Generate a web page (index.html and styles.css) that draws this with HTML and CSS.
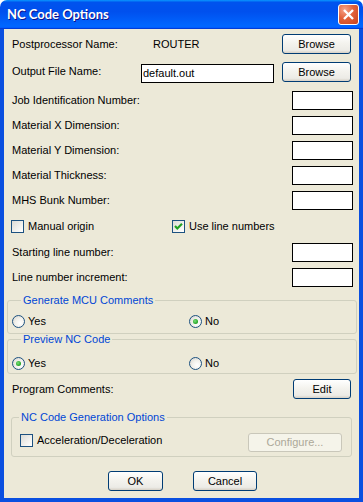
FILE: index.html
```html
<!DOCTYPE html>
<html lang="en">
<head>
    <meta charset="UTF-8">
    <title>NC Code Options</title>
    <link rel="stylesheet" href="styles.css">
</head>
<body>
    <div class="window">
        <div class="titlebar">
            <span class="title">NC Code Options</span>
            <span class="close">
                <svg width="19" height="19" viewBox="0 0 19 19">
                    <path d="M5 5 L14 14 M14 5 L5 14" stroke="#fff" stroke-width="2.4" fill="none"/>
                </svg>
            </span>
        </div>

        <div class="frame">
            <div class="row row-top">
                <span class="label-fixed">Postprocessor Name:</span>
                <span class="value">ROUTER</span>
                <button class="btn btn-browse">Browse</button>
            </div>

            <div class="row row-file">
                <span class="label-fixed">Output File Name:</span>
                <span class="textbox textbox-wide">default.out</span>
                <button class="btn btn-browse">Browse</button>
            </div>

            <div class="row row-field first">
                <span class="label">Job Identification Number:</span>
                <span class="textbox"></span>
            </div>
            <div class="row row-field">
                <span class="label">Material X Dimension:</span>
                <span class="textbox"></span>
            </div>
            <div class="row row-field">
                <span class="label">Material Y Dimension:</span>
                <span class="textbox"></span>
            </div>
            <div class="row row-field">
                <span class="label">Material Thickness:</span>
                <span class="textbox"></span>
            </div>
            <div class="row row-field">
                <span class="label">MHS Bunk Number:</span>
                <span class="textbox"></span>
            </div>

            <div class="row row-checks">
                <span class="check-item first-check">
                    <span class="check"></span>
                    <span>Manual origin</span>
                </span>
                <span class="check-item">
                    <span class="check">
                        <svg width="11" height="11" viewBox="0 0 11 11">
                            <path d="M2 5 L4.3 7.5 L9 2.8" stroke="#21a121" stroke-width="2.2" fill="none"/>
                        </svg>
                    </span>
                    <span>Use line numbers</span>
                </span>
            </div>

            <div class="row row-field first">
                <span class="label">Starting line number:</span>
                <span class="textbox"></span>
            </div>
            <div class="row row-field">
                <span class="label">Line number increment:</span>
                <span class="textbox"></span>
            </div>

            <fieldset class="group group-mcu">
                <legend>Generate MCU Comments</legend>
                <div class="radio-row">
                    <span class="radio-item first-radio">
                        <span class="radio"></span>
                        <span>Yes</span>
                    </span>
                    <span class="radio-item">
                        <span class="radio"><span class="dot"></span></span>
                        <span>No</span>
                    </span>
                </div>
            </fieldset>

            <fieldset class="group group-preview">
                <legend>Preview NC Code</legend>
                <div class="radio-row">
                    <span class="radio-item first-radio">
                        <span class="radio"><span class="dot"></span></span>
                        <span>Yes</span>
                    </span>
                    <span class="radio-item">
                        <span class="radio"></span>
                        <span>No</span>
                    </span>
                </div>
            </fieldset>

            <div class="row row-edit">
                <span class="label">Program Comments:</span>
                <button class="btn btn-edit">Edit</button>
            </div>

            <fieldset class="group group-gen">
                <legend>NC Code Generation Options</legend>
                <div class="gen-row">
                    <span class="check-item">
                        <span class="check"></span>
                        <span>Acceleration/Deceleration</span>
                    </span>
                    <button class="btn btn-configure" disabled>Configure...</button>
                </div>
            </fieldset>

            <div class="actions">
                <button class="btn btn-ok">OK</button>
                <button class="btn btn-cancel">Cancel</button>
            </div>
        </div>
    </div>
</body>
</html>
```

FILE: styles.css
```css
* {
    box-sizing: border-box;
}

html, body {
    margin: 0;
    padding: 0;
    background: #ffffff;
}

body {
    font-family: "Liberation Sans", Arial, sans-serif;
    font-size: 11px;
    line-height: 13px;
    color: #000;
}

.window {
    width: 363px;
    height: 502px;
    display: flex;
    flex-direction: column;
}

.titlebar {
    height: 29px;
    flex: none;
    display: flex;
    align-items: center;
    justify-content: space-between;
    padding: 0 4px 0 7px;
    border-radius: 7px 7px 0 0;
    background: linear-gradient(180deg, #0997ff, #0053ee 8%, #0050ee 40%, #0066ff 88%, #0066ff 93%, #005bff 95%, #003dd7 96%, #003dd7);
}

.title {
    font-family: Lato, "Liberation Sans", sans-serif;
    font-weight: bold;
    font-size: 13px;
    color: #fff;
    text-shadow: 1px 1px #0f1089;
}

.close {
    width: 21px;
    height: 21px;
    border: 1px solid #fff;
    border-radius: 3px;
    background: radial-gradient(circle at 30% 25%, #f7a48a, #e2623b 45%, #c9431c);
}

.close svg {
    display: block;
}

.frame {
    flex: 1;
    background: #ece9d8;
    border: 4px solid #0a4fe0;
    border-top: 0;
    padding: 5px 6px 0 8px;
}

.row {
    display: flex;
    align-items: center;
}

.row-top {
    height: 20px;
}

.row-file {
    height: 21px;
    margin-top: 8px;
    align-items: flex-start;
}

.row-file .label-fixed {
    margin-top: 3px;
}

.label-fixed {
    width: 129px;
}

.label {
    flex: 1;
}

.value {
    margin-left: 12px;
}

.textbox {
    display: block;
    width: 61px;
    height: 19px;
    border: 1px solid #000;
    background: #fff;
    padding: 2px 1px;
}

.textbox-wide {
    width: 133px;
    margin-top: 2px;
}

.row-field {
    height: 19px;
    margin-top: 6px;
}

.row-field.first {
    margin-top: 8px;
}

.row-checks {
    height: 17px;
    margin-top: 8px;
}

.check-item {
    display: flex;
    align-items: center;
    gap: 4px;
}

.first-check {
    width: 161px;
    margin-left: -1px;
}

.check {
    width: 13px;
    height: 13px;
    border: 1px solid #1c5180;
    background: linear-gradient(135deg, #dcdbd5, #fbfbf9 85%, #fff);
    display: flex;
    align-items: center;
    justify-content: center;
}

.check svg {
    display: block;
}

.btn {
    font: inherit;
    color: #000;
    padding: 0;
    height: 20px;
    border: 1px solid #003c74;
    border-radius: 3px;
    background: linear-gradient(180deg, #ffffff, #f4f3ee 45%, #ecebe6 85%, #d6d0c5);
    margin-left: auto;
    margin-right: 2px;
}

.btn-browse {
    width: 69px;
}

.btn-edit {
    width: 58px;
}

.group {
    border: 1px solid #d0d0bf;
    border-radius: 3px;
    min-width: 0;
}

.group legend {
    color: #0046d5;
    padding: 0 2px;
    line-height: 13px;
}

.group-mcu {
    margin: 7px -4px 0 -5px;
    padding: 0 4px 3px 4px;
}

.group-preview {
    margin: -1px -4px 0 -5px;
    padding: 0 4px 1px 4px;
}

.group-mcu legend,
.group-preview legend {
    margin-left: 9px;
}

.radio-row {
    display: flex;
    align-items: center;
    height: 17px;
    margin-top: 6px;
}

.group-preview .radio-row {
    margin-top: 9px;
}

.radio-item {
    display: flex;
    align-items: center;
    gap: 3px;
}

.first-radio {
    width: 177px;
}

.radio {
    width: 13px;
    height: 13px;
    border: 1px solid #1c5180;
    border-radius: 50%;
    background: radial-gradient(circle at 65% 65%, #ffffff, #f2f1ec 45%, #d4d2ca);
    display: flex;
    align-items: center;
    justify-content: center;
}

.dot {
    width: 5px;
    height: 5px;
    border-radius: 50%;
    background: radial-gradient(circle at 40% 40%, #7ae07a, #21a121 70%);
}

.row-edit {
    height: 20px;
    margin-top: 5px;
}

.group-gen {
    margin: 12px 1px 0 -1px;
    padding: 0 9px 4px 8px;
}

.group-gen legend {
    margin-left: -1px;
}

.gen-row {
    display: flex;
    align-items: flex-start;
    margin-top: 9px;
    height: 19px;
}

.gen-row .check-item {
    margin-top: 1px;
}

.btn-configure {
    width: 94px;
    height: 19px;
    margin-right: 0;
    color: #aca899;
    border-color: #c9c7ba;
    background: #f5f4ea;
}

.actions {
    display: flex;
    justify-content: center;
    gap: 30px;
    margin-top: 14px;
}

.actions .btn {
    margin: 0;
}

.btn-ok {
    width: 55px;
}

.btn-cancel {
    width: 64px;
}
```
